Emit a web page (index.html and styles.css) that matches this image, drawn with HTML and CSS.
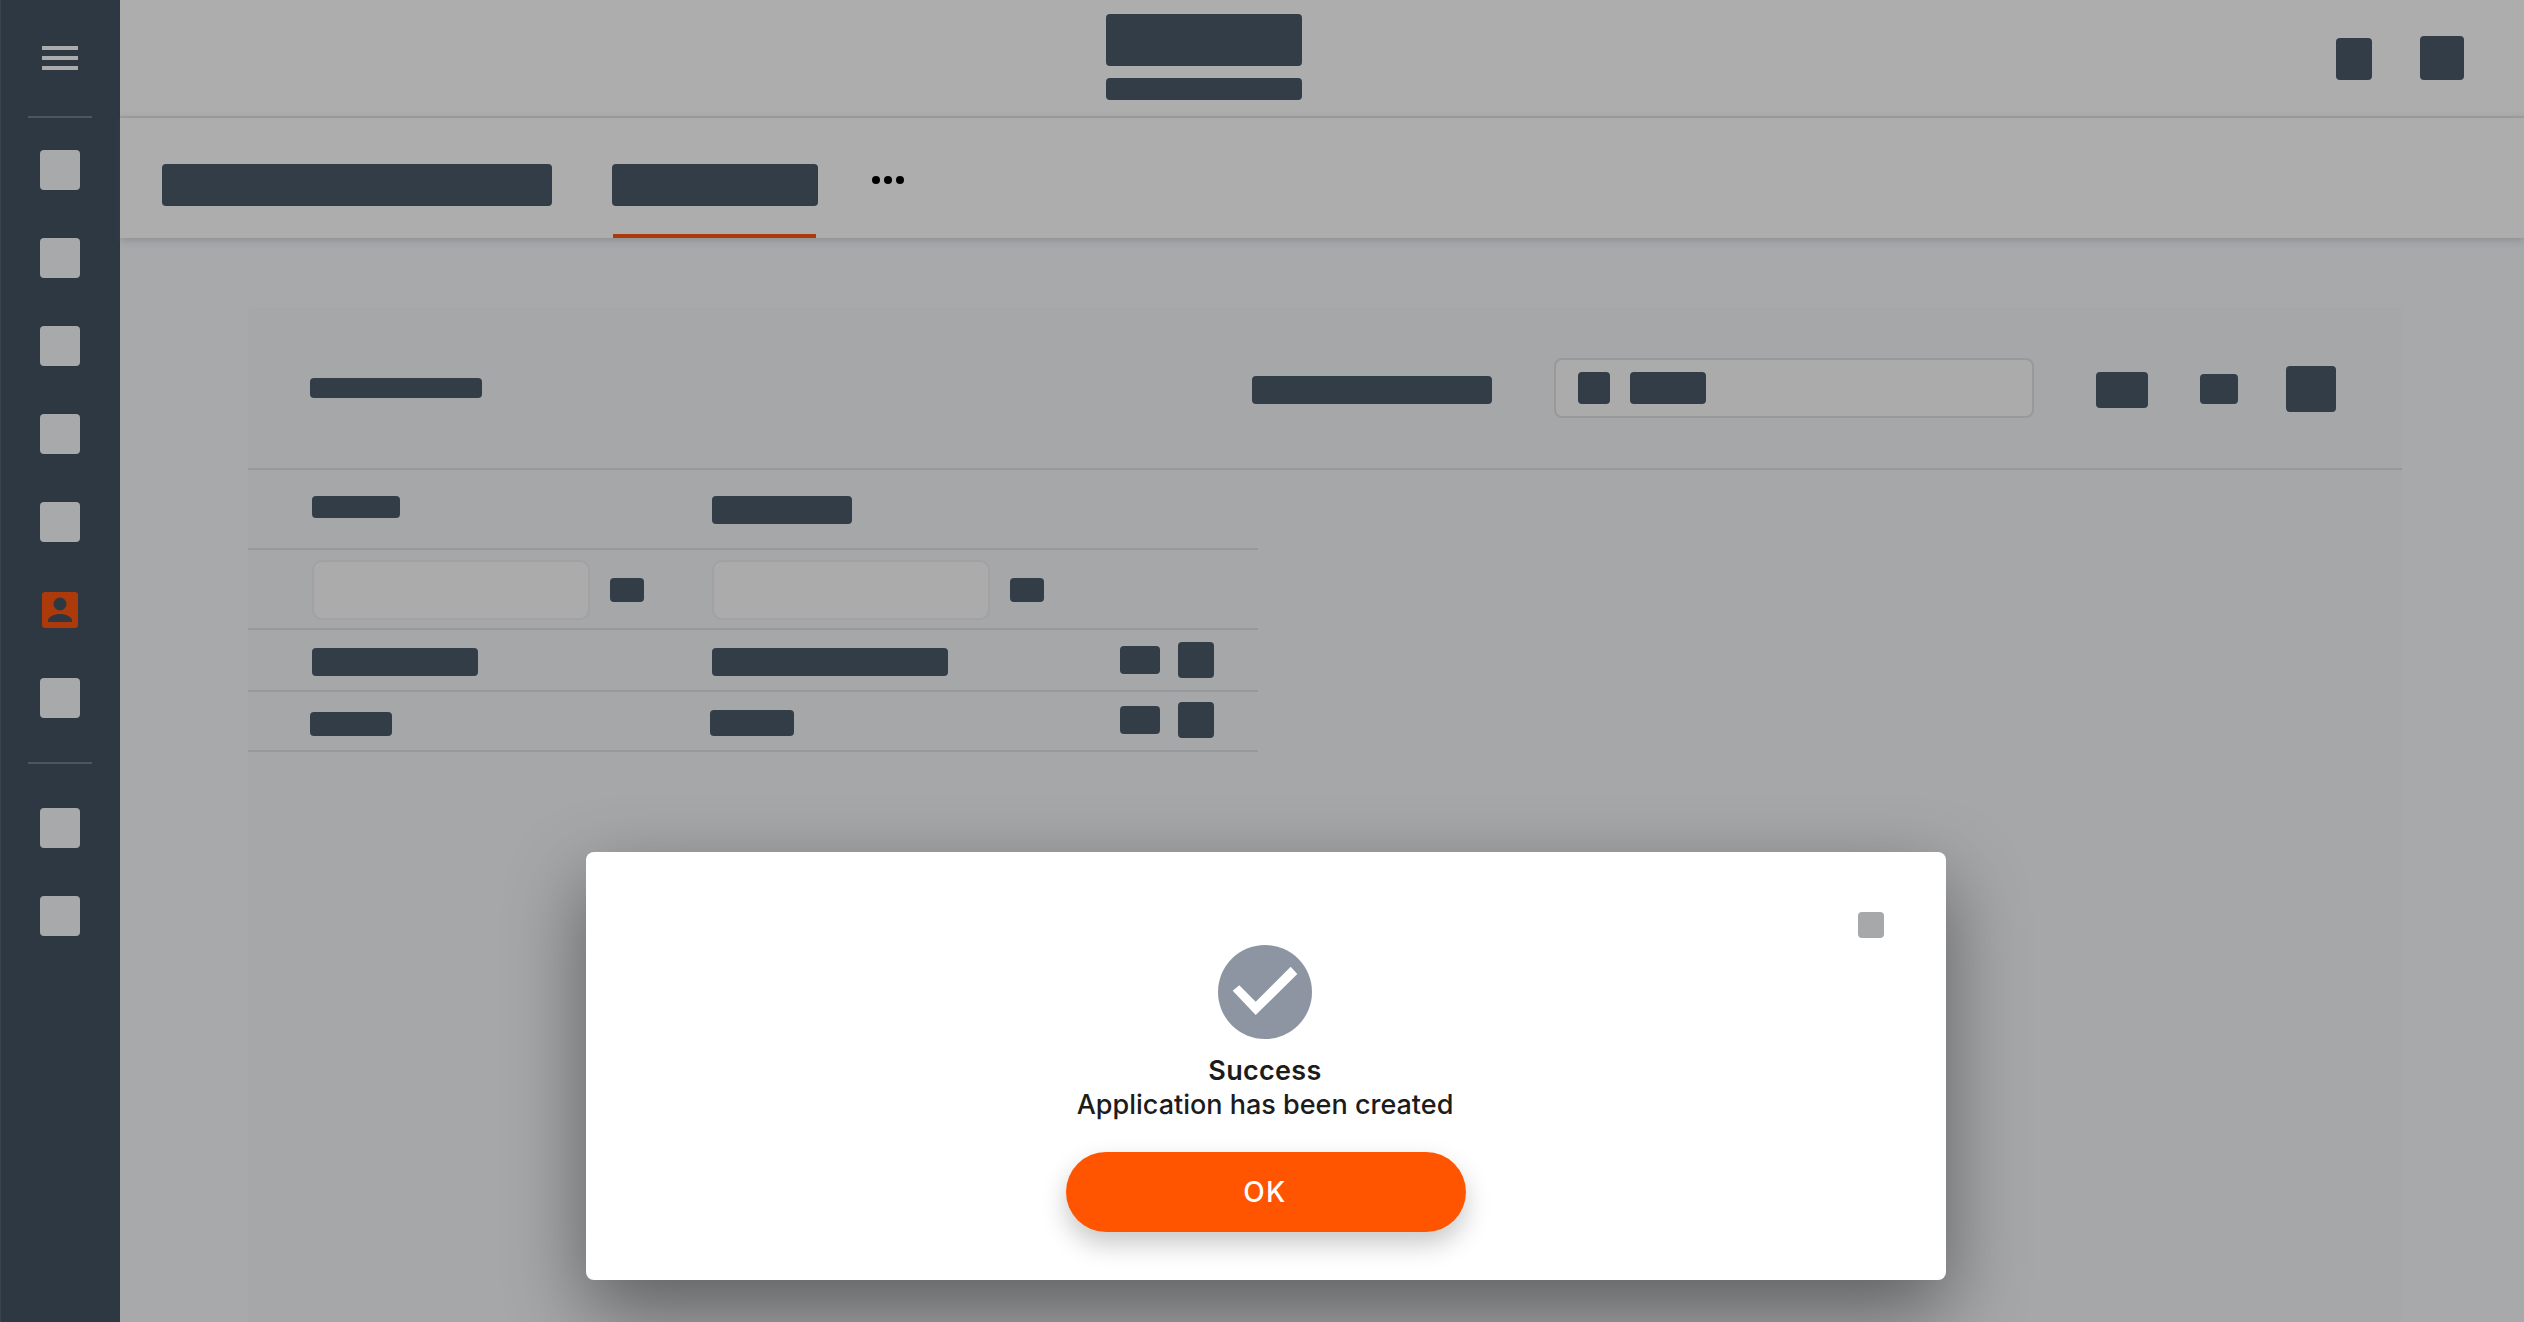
FILE: index.html
```html
<!DOCTYPE html>
<html>
<head>
    <title>Application created</title>
    <link rel="stylesheet" href="styles.css">
</head>
<body>
    <div class="app">
        <div class="sidebar">
            <div class="menuBtn"><span></span><span></span><span></span></div>
            <div class="sideRule"></div>
            <div class="sideGroup">
                <div class="sideItem"></div>
                <div class="sideItem"></div>
                <div class="sideItem"></div>
                <div class="sideItem"></div>
                <div class="sideItem"></div>
                <div class="sideItem sideActive">
                    <svg width="36" height="36" viewBox="0 0 36 36">
                        <rect width="36" height="36" rx="3" fill="#ad3a0a"/>
                        <circle cx="18" cy="12" r="6.5" fill="#2e3843"/>
                        <path d="M6 30v-1.500c0-4 7-6.500 12-6.500s12 2.500 12 6.500v1.500z" fill="#2e3843"/>
                    </svg>
                </div>
                <div class="sideItem"></div>
            </div>
            <div class="sideRule sideRuleLow"></div>
            <div class="sideGroup sideGroupLow">
                <div class="sideItem"></div>
                <div class="sideItem"></div>
            </div>
        </div>

        <div class="main">
            <div class="topbar">
                <div class="brand">
                    <div class="bar brandTop"></div>
                    <div class="bar brandSub"></div>
                </div>
                <div class="topActions">
                    <div class="bar topBtn"></div>
                    <div class="bar topBtnBig"></div>
                </div>
            </div>

            <div class="tabs">
                <div class="tab"><div class="bar tabFirst"></div></div>
                <div class="tab tabCurrent">
                    <div class="bar tabSecond"></div>
                    <div class="tabLine"></div>
                </div>
                <div class="dots"><span></span><span></span><span></span></div>
            </div>

            <div class="content">
                <div class="card">
                    <div class="cardHeader">
                        <div class="bar cardTitle"></div>
                        <div class="bar searchLabel"></div>
                        <div class="searchBox">
                            <div class="bar searchIcon"></div>
                            <div class="bar searchText"></div>
                        </div>
                        <div class="bar toolOne"></div>
                        <div class="bar toolTwo"></div>
                        <div class="bar toolThree"></div>
                    </div>

                    <div class="table">
                        <div class="row rowHead">
                            <div class="bar headOne"></div>
                            <div class="bar headTwo"></div>
                        </div>
                        <div class="row rowFilter">
                            <div class="filterCell">
                                <div class="filterInput"></div>
                                <div class="bar filterBtn"></div>
                            </div>
                            <div class="filterCell">
                                <div class="filterInput"></div>
                                <div class="bar filterBtn"></div>
                            </div>
                        </div>
                        <div class="row rowData">
                            <div class="bar cellOne"></div>
                            <div class="bar cellTwo"></div>
                            <div class="rowActions">
                                <div class="bar rowBtn"></div>
                                <div class="bar rowBtnBig"></div>
                            </div>
                        </div>
                        <div class="row rowData rowLast">
                            <div class="bar cellThree"></div>
                            <div class="bar cellFour"></div>
                            <div class="rowActions">
                                <div class="bar rowBtn"></div>
                                <div class="bar rowBtnBig"></div>
                            </div>
                        </div>
                    </div>
                </div>
            </div>
        </div>

        <div class="overlay">
            <div class="modal">
                <div class="modalClose"></div>
                <svg class="checkIcon" width="94" height="94" viewBox="0 0 94 94">
                    <circle cx="47" cy="47" r="47" fill="#8c95a1"/>
                    <polygon points="14.700,45.700 37.700,70 79.300,29 72.700,21.700 37.700,56.700 21.300,40.300" fill="#fff"/>
                </svg>
                <div class="modalTitle">Success</div>
                <div class="modalText">Application has been created</div>
                <button type="button" class="okBtn">OK</button>
            </div>
        </div>
    </div>
</body>
</html>
```

FILE: styles.css
```css
body {
    margin: 0;
    padding: 0;
    font-family: Inter, "Liberation Sans", sans-serif;
    background-color: #a8a9ab;
    overflow: hidden;
}

.app {
    display: flex;
    position: relative;
    width: 2524px;
    height: 1322px;
    overflow: hidden;
}

.bar {
    background-color: #333d48;
    border-radius: 4px;
    flex: none;
}

/* Sidebar */
.sidebar {
    width: 120px;
    flex: none;
    display: flex;
    flex-direction: column;
    align-items: center;
    background-color: #2e3843;
    box-shadow: inset 1px 0 0 #3a444e;
    box-sizing: border-box;
    padding-top: 46px;
}

.menuBtn {
    display: flex;
    flex-direction: column;
    gap: 6px;
    width: 36px;
}

.menuBtn span {
    display: block;
    height: 4px;
    background-color: #acacac;
}

.sideRule {
    width: 64px;
    height: 2px;
    margin-top: 46px;
    background-color: #4c5660;
}

.sideRuleLow {
    margin-top: 44px;
}

.sideGroup {
    display: flex;
    flex-direction: column;
    gap: 48px;
    margin-top: 32px;
}

.sideGroupLow {
    margin-top: 44px;
}

.sideItem {
    width: 40px;
    height: 40px;
    border-radius: 4px;
    background-color: #a8a9ab;
}

.sideActive {
    display: flex;
    align-items: center;
    justify-content: center;
    background: none;
}

/* Top bar */
.main {
    flex: 1;
    display: flex;
    flex-direction: column;
    min-width: 0;
}

.topbar {
    height: 118px;
    flex: none;
    box-sizing: border-box;
    display: flex;
    padding: 14px 60px 0 986px;
    background-color: #adadad;
    border-bottom: 2px solid #a0a0a0;
}

.brand {
    display: flex;
    flex-direction: column;
    gap: 12px;
}

.brandTop {
    width: 196px;
    height: 52px;
}

.brandSub {
    width: 196px;
    height: 22px;
}

.topActions {
    display: flex;
    align-items: flex-end;
    gap: 48px;
    margin-left: auto;
    height: 66px;
}

.topBtn {
    width: 36px;
    height: 42px;
}

.topBtnBig {
    width: 44px;
    height: 44px;
}

/* Tabs */
.tabs {
    height: 120px;
    flex: none;
    box-sizing: border-box;
    display: flex;
    gap: 60px;
    padding-left: 42px;
    background-color: #adadad;
    box-shadow: 0 2px 8px rgba(70, 72, 85, 0.3);
    position: relative;
}

.tab {
    display: flex;
    flex-direction: column;
    padding-top: 46px;
}

.tabFirst {
    width: 390px;
    height: 42px;
}

.tabSecond {
    width: 206px;
    height: 42px;
}

.tabLine {
    height: 4px;
    margin: auto 2px 0 1px;
    background-color: #ad3a0a;
}

.dots {
    display: flex;
    gap: 4px;
    margin-left: -6px;
    padding-top: 58px;
}

.dots span {
    width: 8px;
    height: 8px;
    border-radius: 50%;
    background-color: #000;
}

/* Card */
.content {
    flex: 1;
    padding: 70px 122px 0 128px;
    min-height: 0;
}

.card {
    height: 100%;
    background-color: #a6a7a9;
    border-radius: 4px 4px 0 0;
}

.cardHeader {
    height: 162px;
    box-sizing: border-box;
    display: flex;
    align-items: center;
    padding: 0 66px 0 62px;
    border-bottom: 2px solid #98999b;
}

.cardTitle {
    width: 172px;
    height: 20px;
}

.searchLabel {
    width: 240px;
    height: 28px;
    margin-left: auto;
    margin-top: 4px;
}

.searchBox {
    width: 480px;
    height: 60px;
    box-sizing: border-box;
    display: flex;
    align-items: center;
    gap: 20px;
    margin-left: 62px;
    padding: 0 22px;
    background-color: #ababab;
    border: 2px solid #99999b;
    border-radius: 8px;
}

.searchIcon {
    width: 32px;
    height: 32px;
}

.searchText {
    width: 76px;
    height: 32px;
}

.toolOne {
    width: 52px;
    height: 36px;
    margin-left: 62px;
    margin-top: 4px;
}

.toolTwo {
    width: 38px;
    height: 30px;
    margin-left: 52px;
    margin-top: 2px;
}

.toolThree {
    width: 50px;
    height: 46px;
    margin-left: 48px;
    margin-top: 2px;
}

/* Table */
.table {
    width: 1010px;
}

.row {
    display: grid;
    grid-template-columns: 400px 408px 1fr;
    box-sizing: border-box;
    padding-left: 64px;
    border-top: 2px solid #98999b;
}

.rowHead {
    height: 78px;
    padding-top: 26px;
    align-items: start;
    border-top: none;
}

.headOne {
    width: 88px;
    height: 22px;
}

.headTwo {
    width: 140px;
    height: 28px;
}

.rowFilter {
    height: 80px;
    padding-top: 2px;
    align-items: center;
}

.filterCell {
    display: flex;
    align-items: center;
    gap: 20px;
}

.filterInput {
    width: 278px;
    height: 60px;
    box-sizing: border-box;
    background-color: #ababab;
    border: 2px solid #a2a2a4;
    border-radius: 10px;
}

.filterBtn {
    width: 34px;
    height: 24px;
}

.rowData {
    height: 62px;
    align-items: center;
}

.rowLast {
    height: 62px;
    border-bottom: 2px solid #98999b;
}

.cellOne {
    width: 166px;
    height: 28px;
    margin-top: 4px;
}

.cellTwo {
    width: 236px;
    height: 28px;
    margin-top: 4px;
}

.cellThree {
    width: 82px;
    height: 24px;
    margin: 6px 0 0 -2px;
}

.cellFour {
    width: 84px;
    height: 26px;
    margin: 4px 0 0 -2px;
}

.rowActions {
    display: flex;
    align-items: center;
    gap: 18px;
}

.rowLast .rowActions {
    margin-top: -2px;
}

.rowBtn {
    width: 40px;
    height: 28px;
}

.rowBtnBig {
    width: 36px;
    height: 36px;
}

/* Success dialog */
.overlay {
    position: absolute;
    top: 852px;
    left: 586px;
}

.modal {
    position: relative;
    width: 1360px;
    height: 428px;
    box-sizing: border-box;
    display: flex;
    flex-direction: column;
    align-items: center;
    padding: 93px 2px 0 0;
    background-color: #fff;
    border-radius: 8px;
    box-shadow: 0 30px 80px rgba(0, 0, 0, 0.44);
}

.modalClose {
    position: absolute;
    top: 60px;
    right: 62px;
    width: 26px;
    height: 26px;
    border-radius: 4px;
    background-color: #a7a8aa;
}

.checkIcon {
    display: block;
}

.modalTitle {
    margin-top: 15px;
    font-size: 27px;
    line-height: 34px;
    font-weight: 600;
    letter-spacing: 0.300px;
    color: #1c1c1c;
}

.modalText {
    font-size: 27px;
    line-height: 34px;
    font-weight: 500;
    color: #1c1c1c;
}

.okBtn {
    width: 400px;
    height: 80px;
    margin: 30px 0 0 2px;
    padding: 0 2px 0 0;
    border: none;
    border-radius: 40px;
    background-color: #ff5500;
    color: #fff;
    font-family: inherit;
    font-size: 28px;
    font-weight: 500;
    letter-spacing: 1.500px;
    box-shadow: 0 12px 26px rgba(0, 0, 0, 0.22);
}
```
